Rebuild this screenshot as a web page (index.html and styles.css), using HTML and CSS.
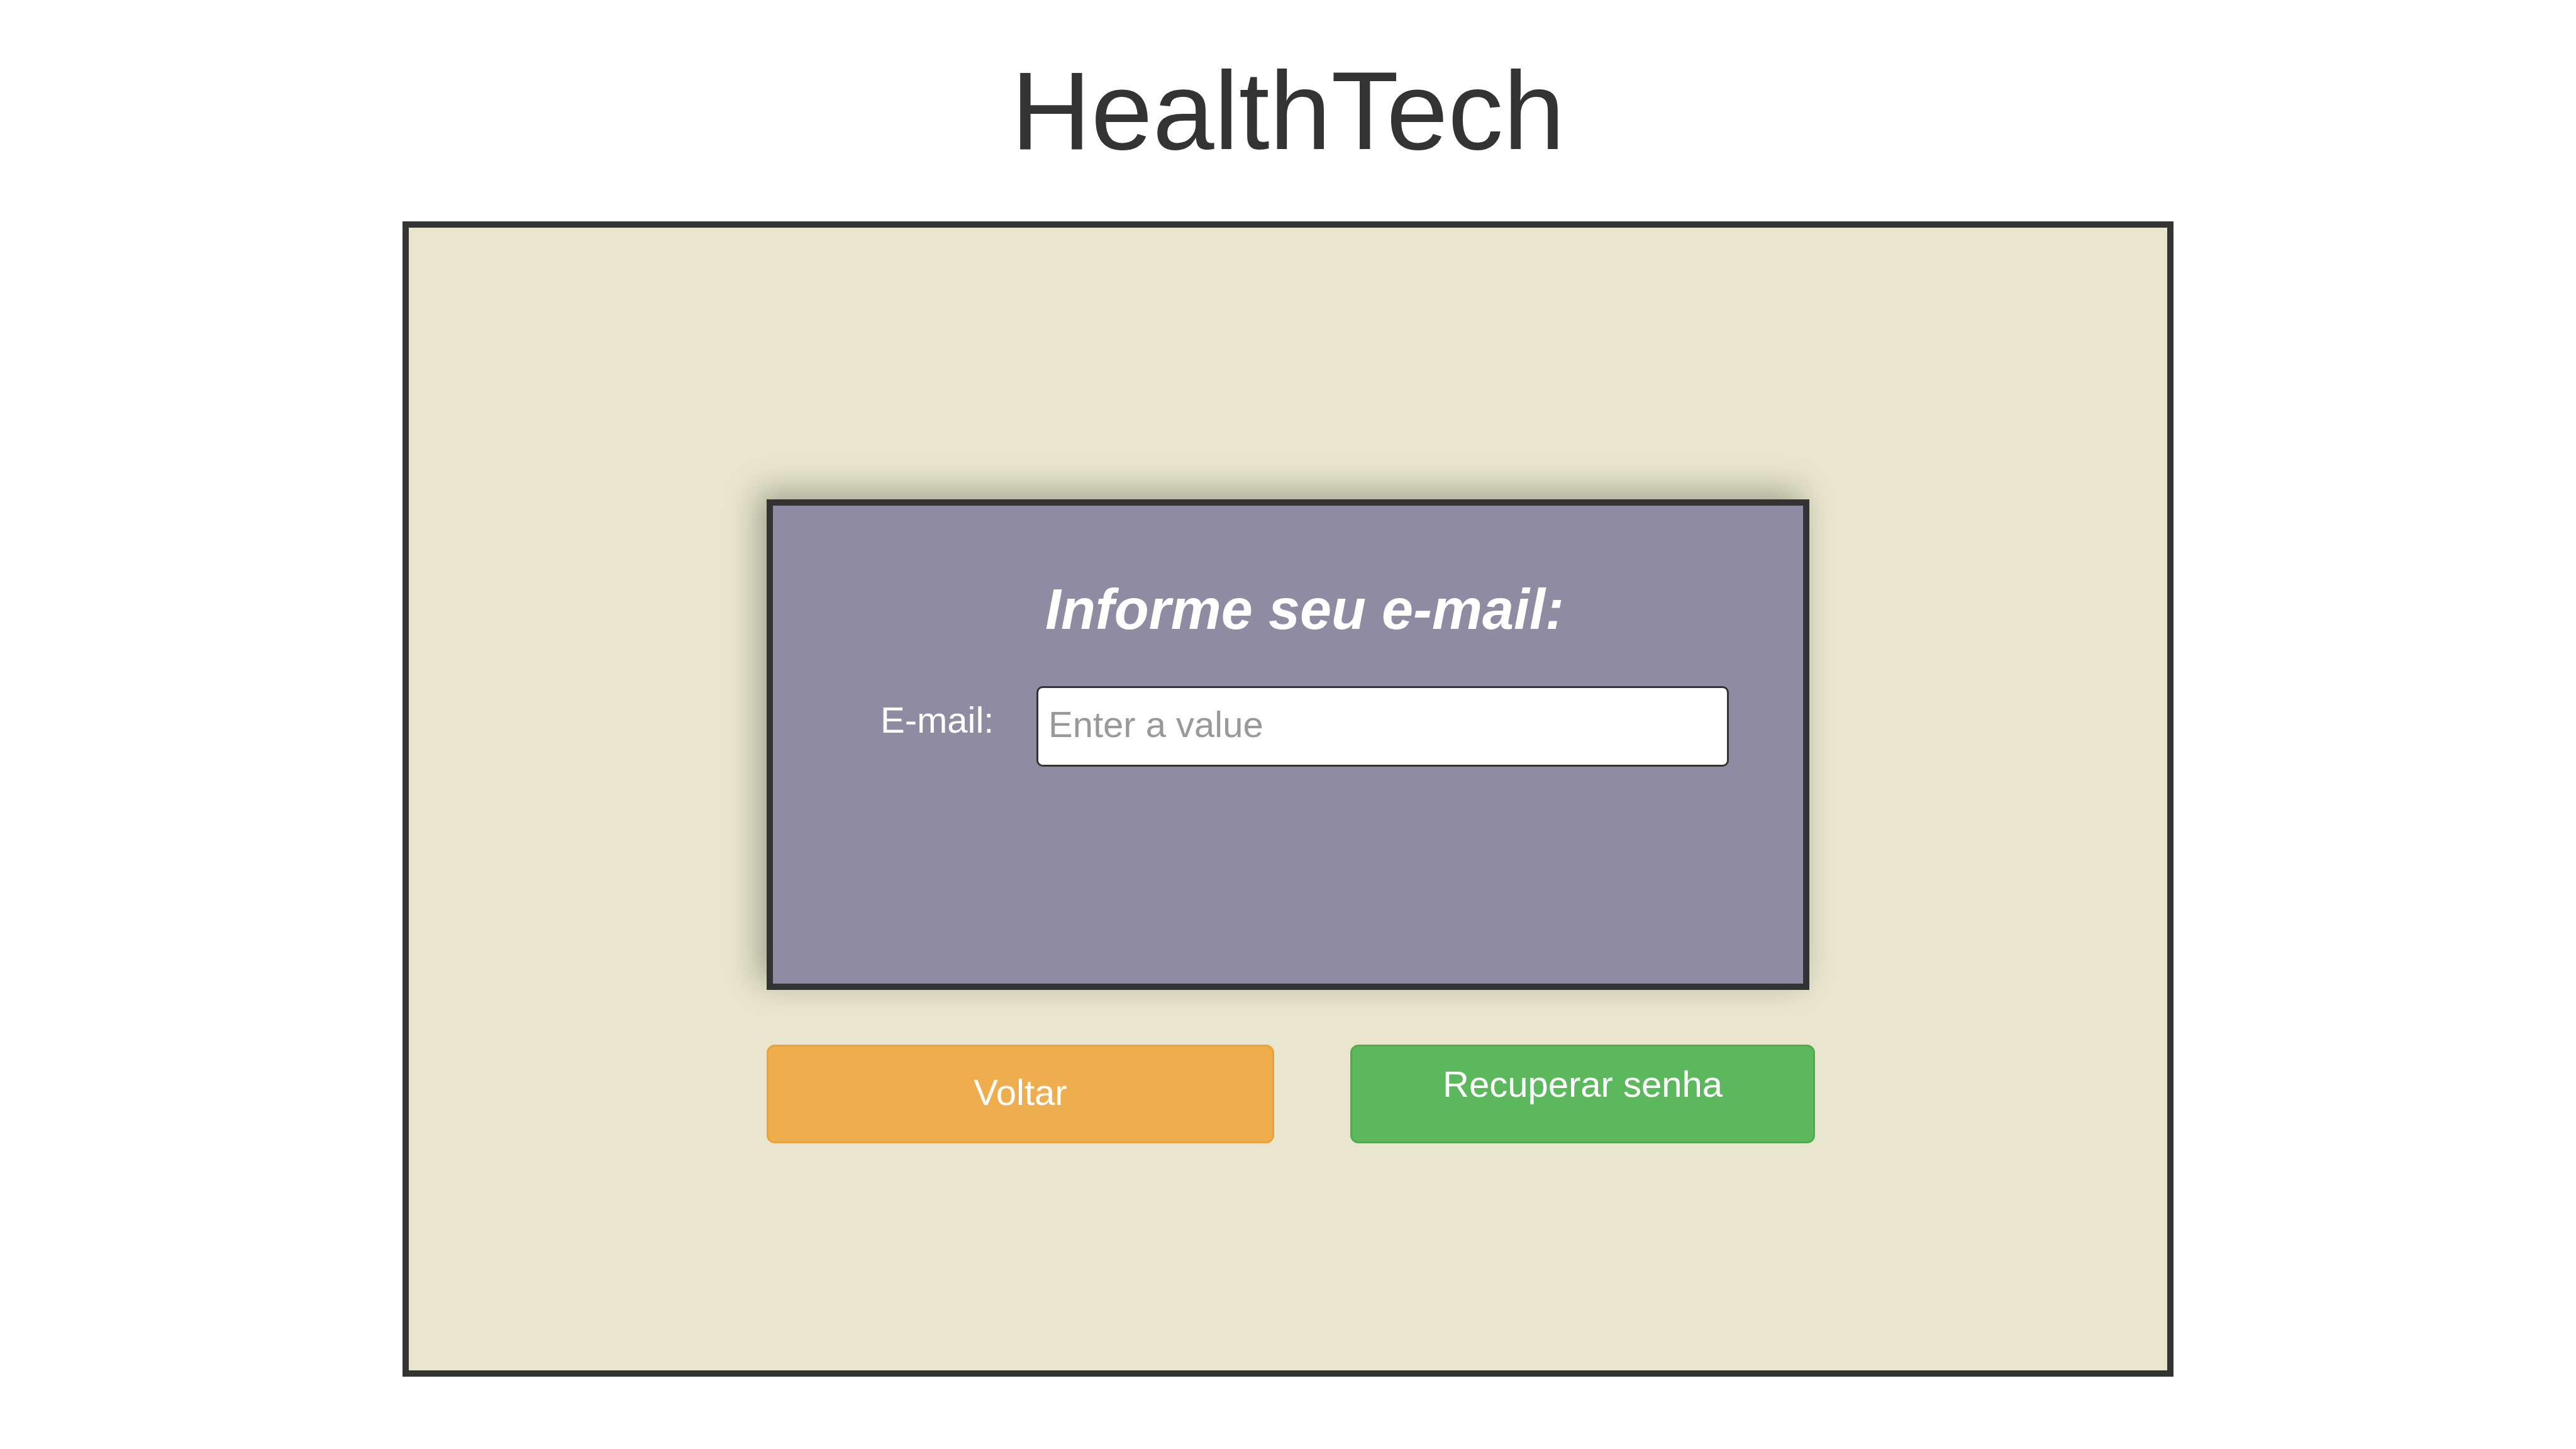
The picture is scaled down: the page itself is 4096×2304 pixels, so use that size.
FILE: index.html
```html
<!DOCTYPE html>
<html lang="pt-BR">
<head>
  <meta charset="utf-8">
  <meta name="viewport" content="width=device-width, initial-scale=1">
  <title>HealthTech</title>
  <link rel="stylesheet" href="styles.css">
</head>
<body>
  <header class="site-header">
    <h1 class="site-title">HealthTech</h1>
  </header>
  <main class="frame">
    <form class="recovery">
      <section class="card">
        <h2 class="card-title">Informe seu e-mail:</h2>
        <div class="field">
          <label class="field-label" for="email">E-mail:</label>
          <input class="field-input" id="email" name="email" type="email" placeholder="Enter a value">
        </div>
      </section>
      <div class="actions">
        <button class="button button-back" type="button">Voltar</button>
        <button class="button button-submit" type="submit">Recuperar senha</button>
      </div>
    </form>
  </main>
</body>
</html>
```
FILE: styles.css
```css
* {
  box-sizing: border-box;
}

body {
  margin: 0;
  background: #ffffff;
  color: #333333;
  font-family: "Liberation Sans", Arial, sans-serif;
  font-size: 58px;
  line-height: 58px;
}

.site-header {
  padding: 88px 0;
  text-align: center;
}

.site-title {
  margin: 0;
  font-size: 176px;
  font-weight: 400;
  line-height: 176px;
}

.frame {
  width: 68.75%;
  margin: 0 auto;
  padding: 432px 0 361px;
  border: 10px solid #333333;
  background: #e8e7cd;
}

.recovery {
  width: 59.3%;
  margin: 0 auto;
}

.card {
  padding: 120px 118px 345px 171px;
  border: 10px solid #333333;
  background: #8e8ba2;
  box-shadow: -13px -13px 48px rgba(0, 0, 0, 0.3);
  color: #ffffff;
}

.card-title {
  margin: 0 0 77px;
  font-size: 90px;
  font-style: italic;
  font-weight: 700;
  line-height: 90px;
  text-align: center;
}

.field {
  display: grid;
  grid-template-columns: 248px 1fr;
  align-items: start;
}

.field-label {
  padding-top: 25px;
}

.field-input {
  width: 100%;
  height: 128px;
  padding: 0 16px 8px;
  border: 3px solid #333333;
  border-radius: 10px;
  background: #ffffff;
  color: #333333;
  font: inherit;
}

.field-input::placeholder {
  color: #999999;
  opacity: 1;
}

/* The button row runs slightly past the card's right edge. */
.actions {
  display: grid;
  grid-template-columns: 807fr 739fr;
  gap: 121px;
  margin: 87px -9px 0 0;
}

.button {
  display: flex;
  align-items: flex-start;
  justify-content: center;
  height: 157px;
  padding: 44px 16px 0;
  border: 3px solid;
  border-radius: 13px;
  color: #ffffff;
  font: inherit;
  cursor: pointer;
}

.button-back {
  border-color: #eea236;
  background: #f0ad4e;
}

.button-submit {
  padding-top: 31px;
  border-color: #4cae4c;
  background: #5cb85c;
}
```
